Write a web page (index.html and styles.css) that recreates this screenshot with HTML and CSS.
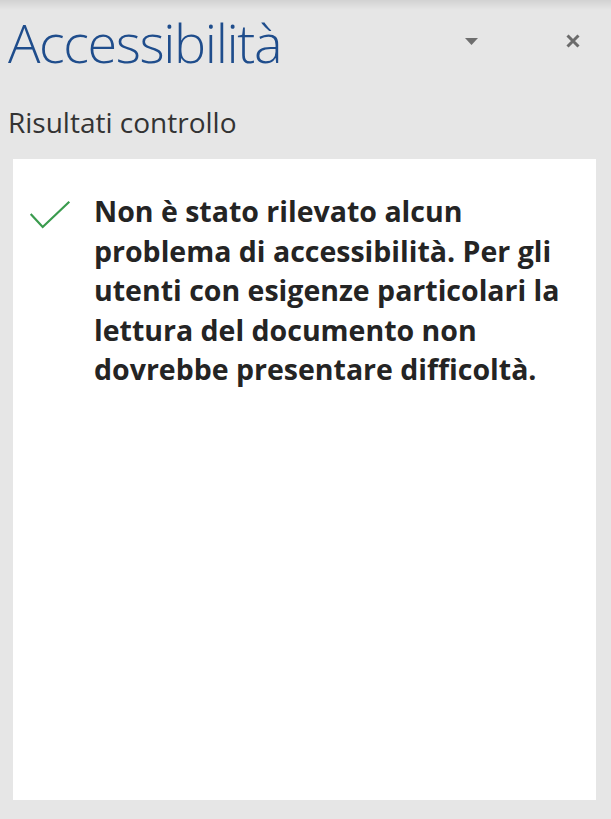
FILE: index.html
```html
<!DOCTYPE html>
<html lang="it">
<head>
<meta charset="utf-8">
<title>Accessibilità</title>
<link rel="stylesheet" href="styles.css">
</head>
<body>
<div class="pane">
  <div class="header">
    <h1 class="title">Accessibilità</h1>
    <div class="spacer"></div>
    <svg class="dropdown" width="13" height="7" viewBox="0 0 13 7"><polygon points="0,0 13,0 6.5,7" fill="#6e6e6e"/></svg>
    <svg class="close" width="14" height="14" viewBox="0 0 14 14"><path d="M1.5 1.5 L12.5 12.5 M12.5 1.5 L1.5 12.5" stroke="#6b6b6b" stroke-width="3" fill="none"/></svg>
  </div>
  <div class="subtitle">Risultati controllo</div>
  <div class="results">
    <div class="result">
      <svg class="check" width="44" height="30" viewBox="0 0 44 30"><path d="M2.7 15 L14.7 28 L41.3 2.7" stroke="#3a9b4e" stroke-width="2.2" fill="none"/></svg>
      <p class="message">Non è stato rilevato alcun problema di accessibilità. Per gli utenti con esigenze particolari la lettura del documento non dovrebbe presentare difficoltà.</p>
    </div>
  </div>
</div>
</body>
</html>
```
FILE: styles.css
```css
html, body {
  margin: 0;
  padding: 0;
}
body {
  background: #e6e6e6;
  font-family: "Open Sans", "Noto Sans", sans-serif;
}
.pane {
  height: 819px;
  display: flex;
  flex-direction: column;
  background: linear-gradient(to bottom, #d2d2d2 0px, #e6e6e6 10px, #e6e6e6 100%);
}
.header {
  display: flex;
  align-items: center;
  padding: 12px 31px 0 8px;
}
.title {
  margin: 0;
  font-size: 54px;
  line-height: 60px;
  font-weight: 300;
  letter-spacing: -1.4px;
  color: #1f4d8c;
}
.spacer {
  flex: 1;
}
.dropdown {
  margin-right: 88px;
  margin-top: -1px;
}
.close {
  margin-top: -2px;
}
.subtitle {
  margin: 32px 0 0 8px;
  font-size: 28px;
  line-height: 36px;
  color: #333333;
}
.results {
  flex: 1;
  margin: 19px 15px 19px 13px;
  background: #ffffff;
  padding: 33px 0 0 15px;
}
.result {
  display: flex;
  align-items: flex-start;
}
.check {
  flex: none;
  margin-top: 7px;
  margin-right: 22px;
}
.message {
  margin: 0;
  width: 480px;
  font-size: 28.5px;
  line-height: 39.5px;
  font-weight: 700;
  color: #242424;
}
```
